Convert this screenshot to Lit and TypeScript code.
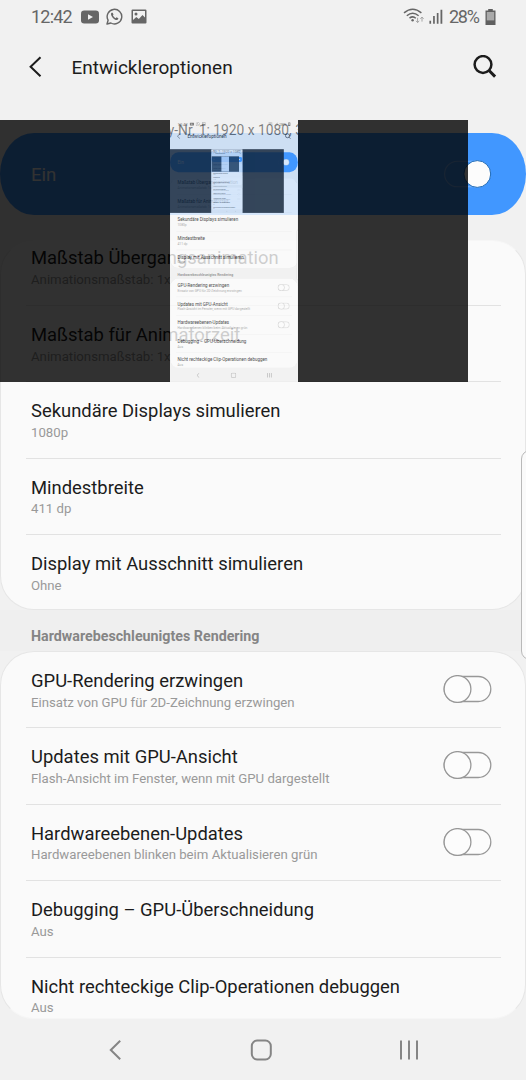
import { LitElement, html, css, nothing } from "lit";
import { customElement, property } from "lit/decorators.js";

interface Entry {
  title: string;
  sub: string;
  toggle?: boolean;
}

const DRAWING: Entry[] = [
  { title: "Maßstab Übergangsanimation", sub: "Animationsmaßstab: 1x" },
  { title: "Maßstab für Animatorzeit", sub: "Animationsmaßstab: 1x" },
  { title: "Sekundäre Displays simulieren", sub: "1080p" },
  { title: "Mindestbreite", sub: "411 dp" },
  { title: "Display mit Ausschnitt simulieren", sub: "Ohne" },
];

const HARDWARE: Entry[] = [
  { title: "GPU-Rendering erzwingen", sub: "Einsatz von GPU für 2D-Zeichnung erzwingen", toggle: true },
  { title: "Updates mit GPU-Ansicht", sub: "Flash-Ansicht im Fenster, wenn mit GPU dargestellt", toggle: true },
  { title: "Hardwareebenen-Updates", sub: "Hardwareebenen blinken beim Aktualisieren grün", toggle: true },
  { title: "Debugging – GPU-Überschneidung", sub: "Aus" },
  { title: "Nicht rechteckige Clip-Operationen debuggen", sub: "Aus" },
];

@customElement("toggle-switch")
export class ToggleSwitch extends LitElement {
  @property({ type: Boolean }) on = false;

  static styles = css`
    :host { display: block; width: 49px; height: 28px; flex: none; }
    svg { display: block; }
  `;

  render() {
    return this.on
      ? html`<svg width="49" height="28" viewBox="0 0 49 28">
          <rect x="1.6" y="1.2" width="45" height="25.6" rx="12.8" fill="none" stroke="#7fb8ff" stroke-width="1.1" />
          <circle cx="34.3" cy="14" r="13.4" fill="#fcfcfc" stroke="#1b69b8" stroke-width="1" />
        </svg>`
      : html`<svg width="49" height="28" viewBox="0 0 49 28">
          <rect x="1.2" y="1.5" width="46.6" height="25" rx="12.5" fill="#fcfcfc" stroke="#989898" stroke-width="1.3" />
          <circle cx="14.5" cy="14" r="13.4" fill="#fcfcfc" stroke="#989898" stroke-width="1.3" />
        </svg>`;
  }
}

/* Settings page; the simulated display on top of it mirrors the page itself. */
@customElement("settings-screen")
export class SettingsScreen extends LitElement {
  @property({ type: Number }) depth = 0;

  static styles = css`
    :host { display: block; width: 526px; height: 1080px; }
    .screen {
      position: relative; display: flex; flex-direction: column;
      width: 526px; height: 1080px; overflow: hidden; box-sizing: border-box;
      background: #f1f1f1; font-family: Roboto, "Liberation Sans", sans-serif; color: #1c1c1c;
    }
    svg { display: block; flex: none; }
    .status { display: flex; align-items: center; height: 33px; padding: 0 30.5px 0 31px; flex: none; color: #666; font-size: 18px; }
    .clock { width: 49.5px; white-space: nowrap; letter-spacing: -0.8px; }
    .notes { display: flex; align-items: center; gap: 7.5px; flex: 1; }
    .battery-text { width: 35.5px; margin-left: 6px; white-space: nowrap; letter-spacing: -1.3px; }
    .header { display: flex; align-items: center; height: 68px; padding: 0 29px 0 28px; flex: none; }
    .heading { flex: 1; margin-left: 29.5px; padding-top: 2px; font-size: 19px; line-height: 28px; }
    .master {
      display: flex; align-items: center; justify-content: space-between;
      margin-top: 32.3px; height: 81.7px; padding: 0 34px 0 31px; box-sizing: border-box; flex: none;
      background: #4197ff; border-radius: 34px / 41px; color: #fff; font-size: 18.6px;
    }
    .master span { padding-top: 2px; }
    .card {
      display: flex; flex-direction: column; flex: none; box-sizing: border-box;
      overflow: hidden; background: #fafafa; border: 1px solid #e6e6e6; border-radius: 34px;
    }
    .first { margin-top: 25px; height: 370px; justify-content: flex-end; border-top-color: #f6f6f6; }
    .second { height: 368px; border-bottom-color: #f6f6f6; }
    .section { display: flex; align-items: center; height: 41px; padding: 11px 31px 0; box-sizing: border-box; flex: none; background: #efefef; color: #858585; font-size: 14.25px; font-weight: 700; }
    .row {
      display: flex; align-items: flex-start; justify-content: space-between; height: 76.4px; flex: none;
      margin: 0 24.5px; padding: 0 8.3px 0 5.5px; box-sizing: border-box; border-bottom: 1.4px solid #e2e2e2;
    }
    .row:last-child { border-bottom: 0; height: 74px; }
    .row toggle-switch { margin-top: 22.8px; }
    .title { font-size: 18.4px; line-height: 24px; white-space: nowrap; }
    .sub { padding-top: 0.7px; font-size: 13.2px; line-height: 18px; color: #999; white-space: nowrap; }
    .texts { padding-top: 17px; }
    .nav { display: flex; align-items: center; justify-content: space-between; flex: 1; padding: 1px 106px 0 108.5px; }
    .handle {
      position: absolute; left: 520.5px; top: 450px; width: 20px; height: 209.5px; box-sizing: border-box;
      border: 1px solid #b9b9b9; border-radius: 9px; background: #fafafa;
    }
    .display {
      position: absolute; left: 0; top: 119.7px; width: 467.5px; height: 262.6px;
      background: #000; opacity: 0.8; overflow: hidden; display: flex; justify-content: center;
    }
    .mirror { position: relative; width: 128px; height: 262.6px; overflow: hidden; background: #f1f1f1; }
    .scaled { width: 526px; height: 1080px; transform: scale(0.2432); transform-origin: 0 0; }
    .label { position: absolute; left: -2px; top: 1px; font-size: 13.8px; line-height: 18px; white-space: nowrap; color: rgba(0, 0, 0, 0.6); }
  `;

  private row(e: Entry) {
    return html`<div class="row">
      <div class="texts"><div class="title">${e.title}</div><div class="sub">${e.sub}</div></div>
      ${e.toggle ? html`<toggle-switch></toggle-switch>` : nothing}
    </div>`;
  }

  render() {
    return html`<div class="screen">
      <div class="status">
        <div class="clock">12:42</div>
        <div class="notes">
          <svg width="18" height="14" viewBox="0 0 18 14"><rect y="0.5" width="18" height="13" rx="3.2" fill="#666" /><path d="M7 4.2 12 7 7 9.8Z" fill="#f1f1f1" /></svg>
          <svg width="17" height="17" viewBox="0 0 17 17" fill="none" stroke="#666" stroke-width="1.4">
            <path d="M1 16 2.1 12.2A7.3 7.3 0 1 1 4.9 15Z" stroke-linejoin="round" />
            <path d="M5.5 4.8C4.4 6 5.2 8 6.7 9.7 8.5 11.7 10.7 12.6 12 11.6L12.4 10.3 10.5 9.3 9.6 10.2C8.5 9.8 7.5 8.8 6.9 7.6L7.5 6.8 6.7 4.7Z" fill="#666" stroke="none" />
          </svg>
          <svg width="16" height="15" viewBox="0 0 16 15"><path d="M1.6 0.5H14.4Q15.5 0.5 15.5 1.6V13.4Q15.5 14.5 14.4 14.5H1.6Q0.5 14.5 0.5 13.4V1.6Q0.5 0.5 1.6 0.5ZM2 2V11L5.3 8 7.8 10 11.5 6 14 8.6V2Z" fill="#666" fill-rule="evenodd" /><circle cx="5" cy="5" r="1.5" fill="#666" /></svg>
        </div>
        <svg width="23" height="17" viewBox="0 0 23 17" fill="none" stroke="#666" stroke-width="1.5">
          <path d="M3 4.9Q11.7-2.3 20.4 4.9M5.8 7.8Q11.7 2.6 17.6 7.8M8.5 10.2Q11.7 7.6 14.8 10.2" /><circle cx="11.6" cy="12.2" r="1.2" fill="#666" stroke="none" />
          <path d="M16.6 9.8V14.6M15 12.8 16.6 14.6 18.2 12.8M21 13.6V9.2M19.4 10.8 21 9 22.6 10.8" stroke="#a5a5a5" stroke-width="1" />
        </svg>
        <svg width="19" height="16" viewBox="0 0 19 16" fill="#666"><path d="M5.4 11.8H7.1V14.8H5.4ZM9.1 7H10.8V14.8H9.1ZM12.8 4H14.5V14.8H12.8ZM16.5 0.8H18.3V14.8H16.5Z" /></svg>
        <div class="battery-text">28%</div>
        <svg width="11" height="16" viewBox="0 0 11 16"><path d="M3.2 0H7.8V1.6H10.5V16H0.5V1.6H3.2Z" fill="#606060" /><rect x="1.8" y="3" width="7.4" height="8.4" fill="#aaa" /></svg>
      </div>
      <div class="header">
        <svg width="14" height="22" viewBox="0 0 14 22" fill="none" stroke="#1c1c1c" stroke-width="2"><path d="M12.5 1.2 2.6 10.7 12.5 20.2" /></svg>
        <div class="heading">Entwickleroptionen</div>
        <svg width="24" height="24" viewBox="0 0 24 24" fill="none" stroke="#1c1c1c" stroke-width="2.5"><circle cx="10" cy="9.5" r="8.4" /><path d="M15.8 15.3 22.1 21.6" stroke-width="3" /></svg>
      </div>
      <div class="master"><span>Ein</span><toggle-switch on></toggle-switch></div>
      <div class="card first">${DRAWING.map((e) => this.row(e))}</div>
      <div class="section">Hardwarebeschleunigtes Rendering</div>
      <div class="card second">${HARDWARE.map((e) => this.row(e))}</div>
      <div class="nav">
        <svg width="16" height="22" viewBox="0 0 16 22" fill="none" stroke="#858585" stroke-width="2"><path d="M11.2 1.8 1.8 11 11.2 20.2" /></svg>
        <svg width="22" height="22" viewBox="0 0 22 22" fill="none" stroke="#858585" stroke-width="2"><rect x="1.8" y="1.5" width="19" height="19" rx="5.5" /></svg>
        <svg width="22" height="20" viewBox="0 0 22 20" fill="none" stroke="#858585" stroke-width="2"><path d="M3 0.5V19.5M11 0.5V19.5M19 0.5V19.5" /></svg>
      </div>
      <div class="handle"></div>
      <div class="display">
        <div class="mirror">
          ${this.depth < 2
            ? html`<div class="scaled"><settings-screen .depth=${this.depth + 1}></settings-screen></div>`
            : nothing}
          <div class="label">y-Nr. 1: 1920 x 1080, 320 dpi</div>
        </div>
      </div>
    </div>`;
  }
}

@customElement("app-root")
export class AppRoot extends LitElement {
  static styles = css`
    :host { display: block; width: 526px; height: 1080px; overflow: hidden; }
  `;

  render() {
    return html`<settings-screen></settings-screen>`;
  }
}
